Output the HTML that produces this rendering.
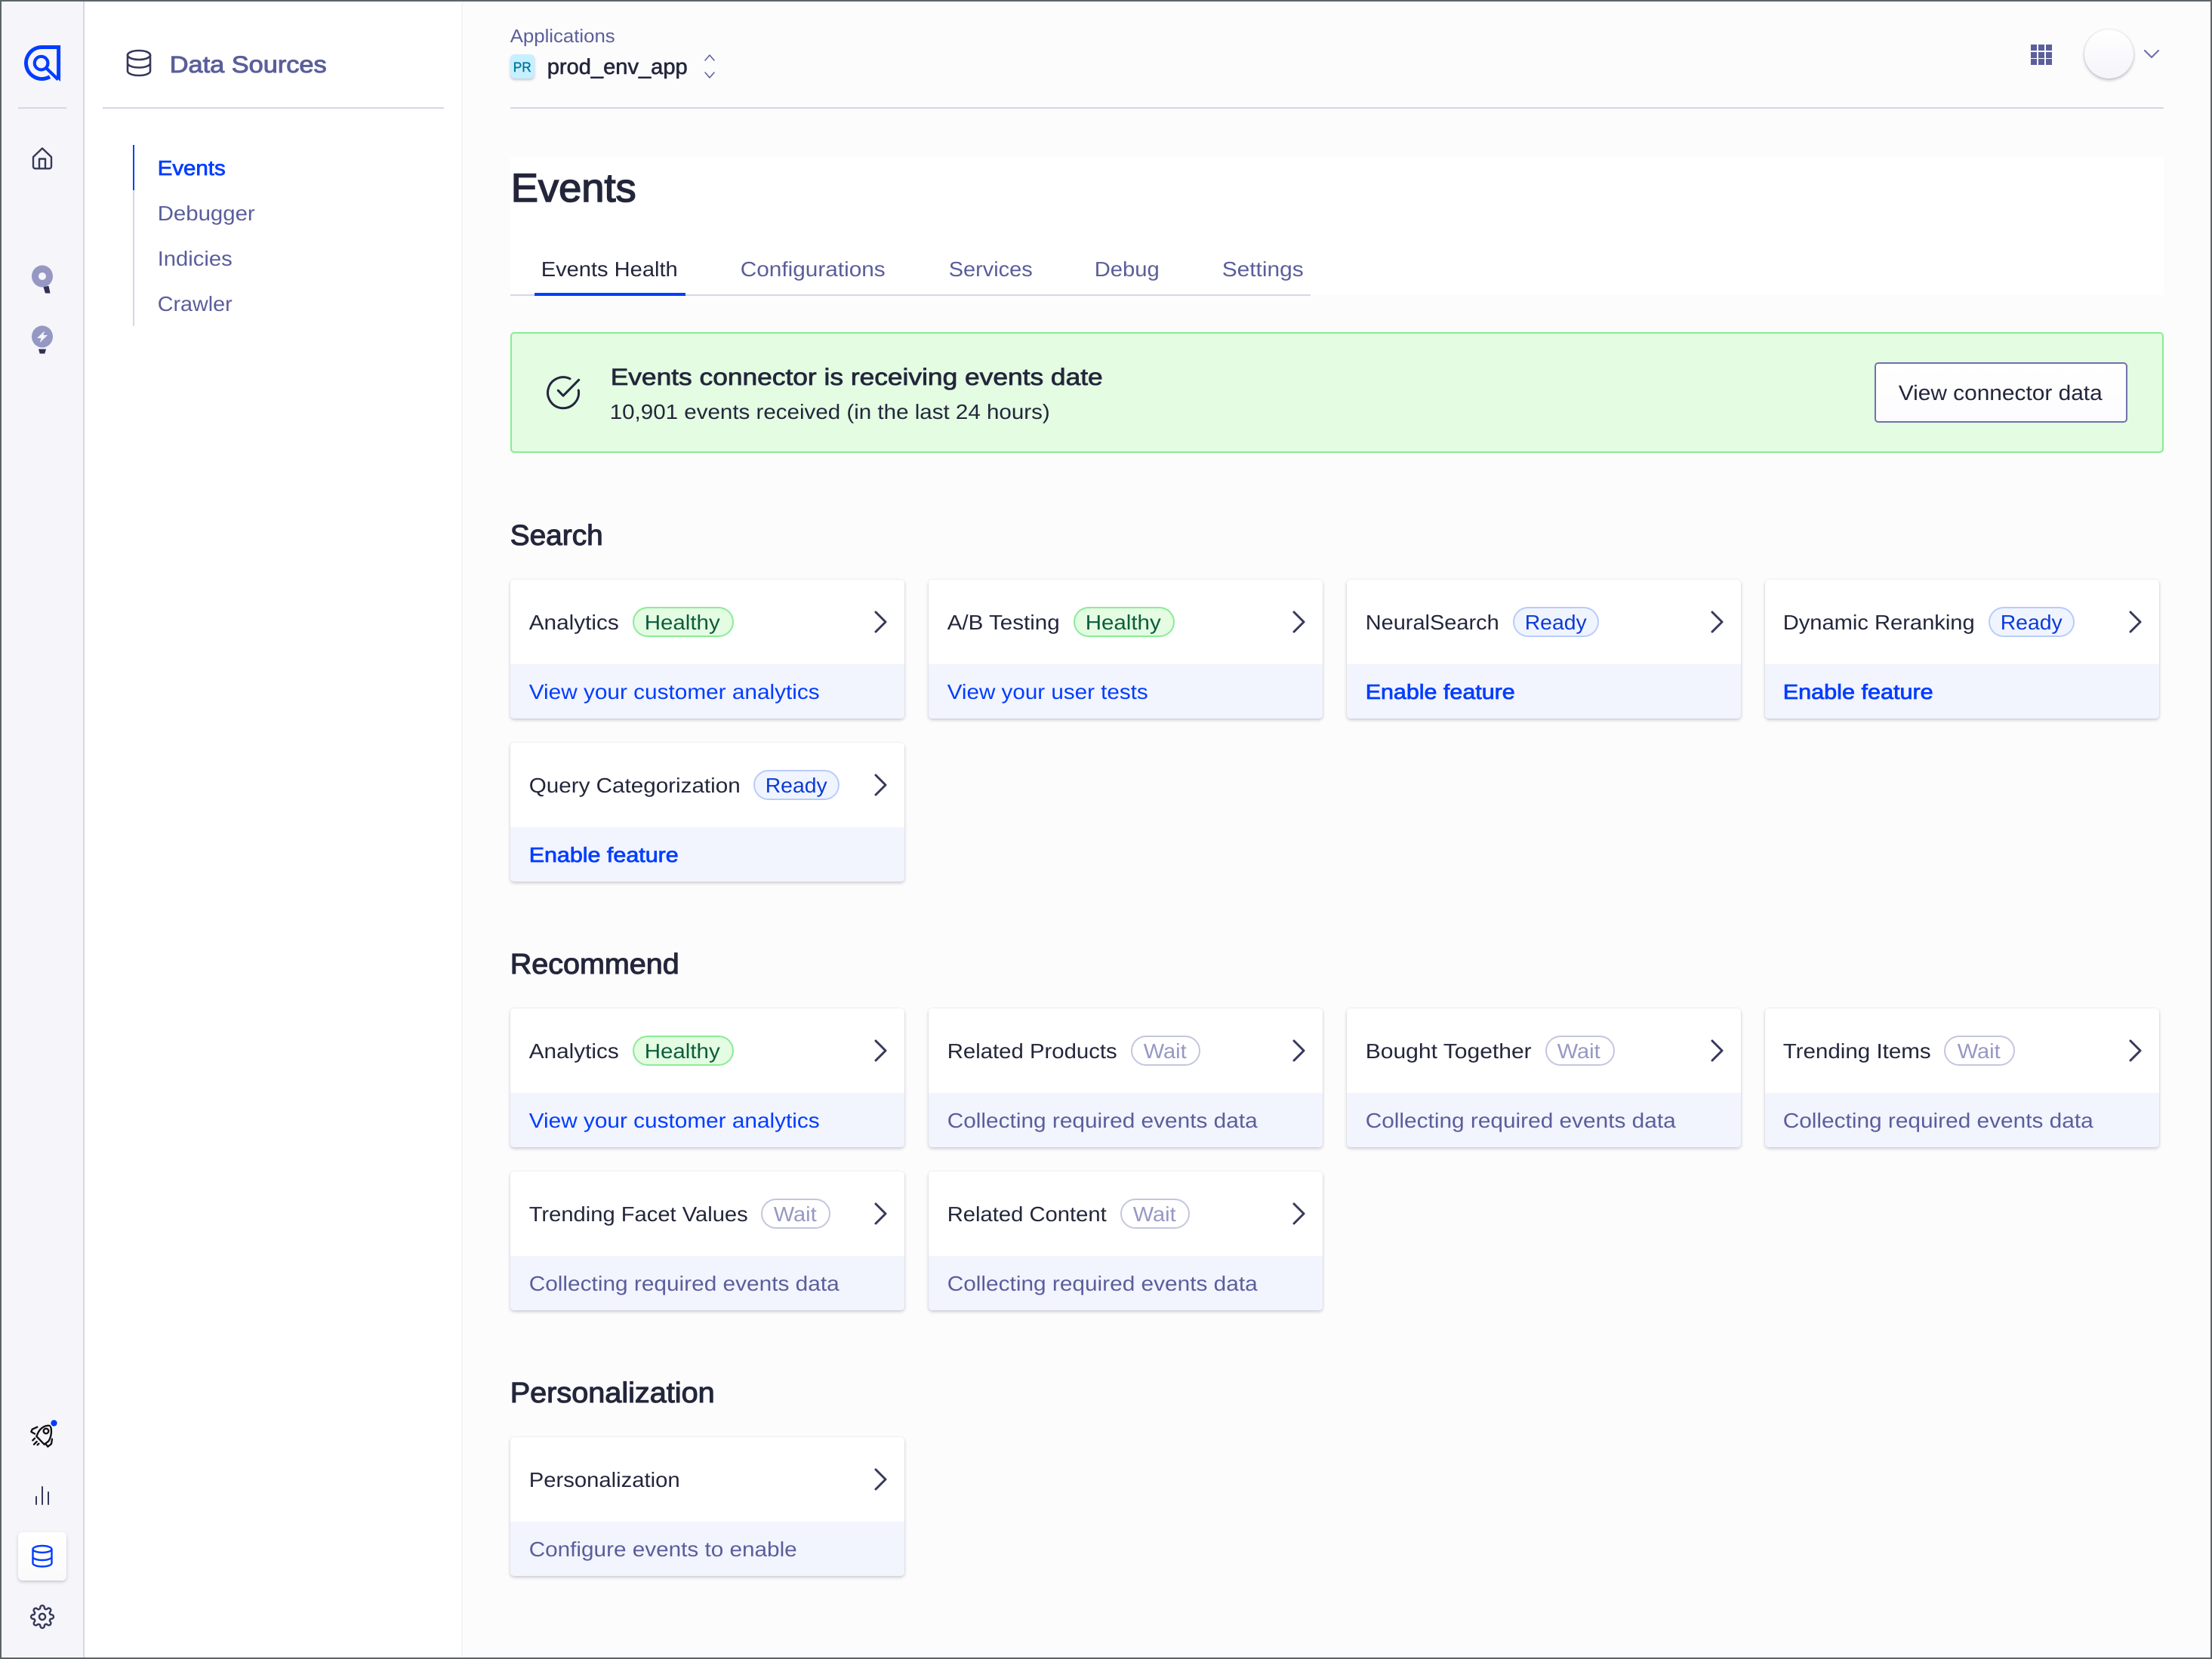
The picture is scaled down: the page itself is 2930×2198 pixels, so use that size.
<!DOCTYPE html>
<html lang="en"><head><meta charset="utf-8"><title>Events</title>
<style>
html,body{margin:0;padding:0;width:2930px;height:2198px;overflow:hidden;background:#fcfcfd}
div{position:absolute;box-sizing:border-box}
#frame{left:0;top:0;width:2930px;height:2198px;border:2px solid #5c6469;z-index:5;pointer-events:none}
.card{width:522px;height:184px;background:#fff;border-radius:5px;box-shadow:0 2px 4px rgba(35,38,59,.22),0 0 2px rgba(35,38,59,.07);overflow:hidden}
.foot{left:0;top:112px;width:522px;height:72px;background:#f2f4fe}
.b{height:40px;border-radius:20px;border:2px solid}
.h{background:#e3fce2;border-color:#8ceb98}
.r{background:#f0f4ff;border-color:#b8ccfa}
.w{background:#fff;border-color:#c4c6de}
svg{position:absolute;left:0;top:0;z-index:3}
text{font-family:"Liberation Sans",Arial,sans-serif;font-size:27.5px;text-rendering:geometricPrecision;fill:#23263b;transform:translateX(-.3px)}
.mid{fill:#5a5e9a}
.blue{fill:#003dff}
.m{stroke:#23263b;stroke-width:.6px}
.semi{stroke:#003dff;stroke-width:.75px}
.hg{fill:#0d5c3c}
.rd{fill:#0b3ad6}
.wt{fill:#9698c3}
.ic{fill:none;stroke:#36395a;stroke-width:2.4;stroke-linecap:round;stroke-linejoin:round}
.ch{fill:none;stroke:#36395a;stroke-width:3;stroke-linecap:round;stroke-linejoin:round}
</style></head><body>
<div style="left:0;top:0;width:112px;height:2198px;background:#f5f5fa;border-right:2px solid #d6d6e7"></div>
<div style="left:112px;top:0;width:499px;height:2198px;background:#fff"></div>
<div style="left:611px;top:0;width:2px;height:2198px;background:#f5f5fa"></div>
<div style="left:24px;top:142px;width:64px;height:2px;background:#d6d6e7"></div>
<div style="left:136px;top:142px;width:452px;height:2px;background:#d6d6e7"></div>
<div style="left:176px;top:192px;width:2px;height:240px;background:#d6d6e7"></div>
<div style="left:176px;top:192px;width:2px;height:60px;background:#003dff"></div>
<div style="left:24px;top:2030px;width:64px;height:64px;border-radius:6px;background:linear-gradient(#fff,#fafafb);box-shadow:0 2px 4px rgba(35,38,59,.22)"></div>
<div style="left:676px;top:142px;width:2190px;height:2px;background:#d6d6e7"></div>
<div style="left:676px;top:72px;width:32px;height:32px;border-radius:6px;background:#c6f0ff;box-shadow:0 2px 3px rgba(35,38,59,.25)"></div>
<div style="left:2761px;top:39px;width:65px;height:65px;border-radius:50%;background:linear-gradient(#fff,#f5f5fa);box-shadow:0 2px 4px rgba(35,38,59,.3),0 0 1px rgba(35,38,59,.3)"></div>
<div style="left:676px;top:208px;width:2190px;height:183px;background:#fff"></div>
<div style="left:676px;top:390px;width:1060px;height:2px;background:#d6d6e7"></div>
<div style="left:708px;top:388px;width:200px;height:4px;background:#003dff"></div>
<div style="left:676px;top:440px;width:2190px;height:160px;background:#e3fce2;border:2px solid #88ec94;border-radius:5px"></div>
<div style="left:2483px;top:480px;width:335px;height:80px;background:linear-gradient(#fff,#fcfcfe);border:2px solid #6f72ac;border-radius:5px"></div>

<div class="card" style="left:676px;top:768px"><div class="foot"></div></div>
<div class="card" style="left:1230px;top:768px"><div class="foot"></div></div>
<div class="card" style="left:1784px;top:768px"><div class="foot"></div></div>
<div class="card" style="left:2338px;top:768px"><div class="foot"></div></div>
<div class="card" style="left:676px;top:984px"><div class="foot"></div></div>
<div class="card" style="left:676px;top:1336px"><div class="foot"></div></div>
<div class="card" style="left:1230px;top:1336px"><div class="foot"></div></div>
<div class="card" style="left:1784px;top:1336px"><div class="foot"></div></div>
<div class="card" style="left:2338px;top:1336px"><div class="foot"></div></div>
<div class="card" style="left:676px;top:1552px"><div class="foot"></div></div>
<div class="card" style="left:1230px;top:1552px"><div class="foot"></div></div>
<div class="card" style="left:676px;top:1904px"><div class="foot"></div></div>

<div class="b h" style="left:838px;top:804px;width:134px"></div>
<div class="b h" style="left:1422px;top:804px;width:134px"></div>
<div class="b r" style="left:2004px;top:804px;width:114px"></div>
<div class="b r" style="left:2634px;top:804px;width:114px"></div>
<div class="b r" style="left:998px;top:1020px;width:114px"></div>
<div class="b h" style="left:838px;top:1372px;width:134px"></div>
<div class="b w" style="left:1498px;top:1372px;width:92px"></div>
<div class="b w" style="left:2047px;top:1372px;width:92px"></div>
<div class="b w" style="left:2575px;top:1372px;width:94px"></div>
<div class="b w" style="left:1008px;top:1588px;width:92px"></div>
<div class="b w" style="left:1484px;top:1588px;width:92px"></div>

<svg width="2930" height="2198" viewBox="0 0 2930 2198" xmlns="http://www.w3.org/2000/svg">
<!-- logo -->
<g fill="none" stroke="#003dff">
<path stroke-width="5" d="M66 101.7A21 21 0 1 1 55.5 62.5H77.6V103"/>
<circle stroke-width="4.2" cx="54.6" cy="83.6" r="8.8"/>
<path stroke-width="4.2" d="M61 90L77 105.5"/>
</g>
<path d="M80 60V108L75 103.2Z" fill="#003dff"/>
<!-- rail icons -->
<path class="ic" d="M44 208L56 196.5L68 208V220.5a2.8 2.8 0 0 1-2.8 2.8H46.8a2.8 2.8 0 0 1-2.8-2.8ZM52 223V210.5H60V223"/>
<ellipse cx="56" cy="366" rx="14" ry="14.5" fill="#9698c3"/><circle cx="56" cy="366" r="5" fill="#f5f5fa"/>
<path d="M57.5 380.3L64.5 378.7L66.5 388.5H60Z" fill="#2f3254"/>
<ellipse cx="56" cy="446" rx="14" ry="14.5" fill="#9698c3"/>
<path d="M59 438.5L49 448H54.5L52.8 454L63 444H57.5Z" fill="#f5f5fa"/>
<path d="M51 462.5H61L59.3 468.5H52.7Z" fill="#2f3254"/>
<!-- rocket -->
<g transform="translate(30 1875) scale(.3333)" fill="none" stroke="#111" stroke-width="7" stroke-linecap="round" stroke-linejoin="round">
<path d="M110 42C90 38 72 50 62 68L55 84L86 116L102 104C113 90 118 62 110 42Z"/>
<circle cx="93" cy="63" r="10"/>
<path d="M58 47L38 56L34 66L48 74"/>
<path d="M117 95L114 114L100 125L92 115"/>
<path d="M48 92L40 100M56 105L45 116M64 113L59 118"/>
</g>
<circle cx="71.5" cy="1885.5" r="5.6" fill="#fff"/><circle cx="71.5" cy="1885.5" r="4.2" fill="#003dff"/>
<path class="ic" style="stroke-width:2" d="M48 1983V1993M56 1970V1993M64 1977V1993"/>
<g fill="none" stroke="#003dff" stroke-width="2.4">
<ellipse cx="56" cy="2052.5" rx="12.5" ry="4.5"/>
<path d="M43.5 2052.5V2071c0 2.6 5.6 4.5 12.5 4.5s12.5-1.9 12.5-4.5V2052.5M43.5 2062.5c0 2.6 5.6 4.5 12.5 4.5s12.5-1.9 12.5-4.5"/>
</g>
<g transform="translate(39.7 2125.7) scale(1.36)" fill="none" stroke="#36395a" stroke-width="1.8" stroke-linecap="round" stroke-linejoin="round">
<circle cx="12" cy="12" r="3"/>
<path d="M19.4 15a1.65 1.65 0 0 0 .33 1.82l.06.06a2 2 0 0 1 0 2.83 2 2 0 0 1-2.83 0l-.06-.06a1.65 1.65 0 0 0-1.82-.33 1.65 1.65 0 0 0-1 1.51V21a2 2 0 0 1-2 2 2 2 0 0 1-2-2v-.09A1.65 1.65 0 0 0 9 19.4a1.65 1.65 0 0 0-1.82.33l-.06.06a2 2 0 0 1-2.83 0 2 2 0 0 1 0-2.83l.06-.06a1.65 1.65 0 0 0 .33-1.82 1.65 1.65 0 0 0-1.51-1H3a2 2 0 0 1-2-2 2 2 0 0 1 2-2h.09A1.65 1.65 0 0 0 4.6 9a1.65 1.65 0 0 0-.33-1.82l-.06-.06a2 2 0 0 1 0-2.83 2 2 0 0 1 2.83 0l.06.06a1.65 1.65 0 0 0 1.82.33H9a1.65 1.65 0 0 0 1-1.51V3a2 2 0 0 1 2-2 2 2 0 0 1 2 2v.09a1.65 1.65 0 0 0 1 1.51 1.65 1.65 0 0 0 1.82-.33l.06-.06a2 2 0 0 1 2.83 0 2 2 0 0 1 0 2.83l-.06.06a1.65 1.65 0 0 0-.33 1.82V9a1.65 1.65 0 0 0 1.51 1H21a2 2 0 0 1 2 2 2 2 0 0 1-2 2h-.09a1.65 1.65 0 0 0-1.51 1z"/>
</g>
<!-- panel -->
<g class="ic" style="stroke:#36395a;stroke-width:2.6">
<ellipse cx="184" cy="73" rx="15" ry="6"/>
<path d="M169 73V94c0 3.5 6.7 6 15 6s15-2.5 15-6V73M169 83.5c0 3.5 6.7 6 15 6s15-2.5 15-6"/>
</g>
<text x="225" y="96" style="font-size:31px;fill:#5a5e9a;stroke:#5a5e9a;stroke-width:.95px" textLength="208" lengthAdjust="spacingAndGlyphs">Data Sources</text>
<text x="209" y="232" class="blue semi" textLength="90" lengthAdjust="spacingAndGlyphs">Events</text>
<text x="209" y="292" class="mid" textLength="129" lengthAdjust="spacingAndGlyphs">Debugger</text>
<text x="209" y="352" class="mid" textLength="99" lengthAdjust="spacingAndGlyphs">Indicies</text>
<text x="209" y="412" class="mid" textLength="99" lengthAdjust="spacingAndGlyphs">Crawler</text>
<!-- header -->
<text x="676" y="56" class="mid" style="font-size:24.5px" textLength="139" lengthAdjust="spacingAndGlyphs">Applications</text>
<text x="680" y="95" style="font-size:18px;fill:#00739c;stroke:#00739c;stroke-width:.4px" textLength="24" lengthAdjust="spacingAndGlyphs">PR</text>
<text x="725" y="98" class="m" style="font-size:28.5px" textLength="186" lengthAdjust="spacingAndGlyphs">prod_env_app</text>
<path d="M934 80L940 73L946 80M934 96L940 103L946 96" fill="none" stroke="#5a5e9a" stroke-width="1.5" stroke-linecap="round" stroke-linejoin="round"/>
<path fill="#5a5e9a" d="M2690 59h8v8h-8zM2700 59h8v8h-8zM2710 59h8v8h-8zM2690 69h8v8h-8zM2700 69h8v8h-8zM2710 69h8v8h-8zM2690 78h8v8h-8zM2700 78h8v8h-8zM2710 78h8v8h-8z"/>
<path d="M2841 67L2850 76L2859 67" fill="none" stroke="#6f72ac" stroke-width="2.2" stroke-linecap="round" stroke-linejoin="round"/>
<!-- title + tabs -->
<text x="677" y="267" style="font-size:53px;stroke:#23263b;stroke-width:1.5px" textLength="166" lengthAdjust="spacingAndGlyphs">Events</text>
<text x="717" y="366" textLength="181" lengthAdjust="spacingAndGlyphs">Events Health</text>
<text x="981" y="366" class="mid" textLength="192" lengthAdjust="spacingAndGlyphs">Configurations</text>
<text x="1257" y="366" class="mid" textLength="111" lengthAdjust="spacingAndGlyphs">Services</text>
<text x="1450" y="366" class="mid" textLength="86" lengthAdjust="spacingAndGlyphs">Debug</text>
<text x="1619" y="366" class="mid" textLength="108" lengthAdjust="spacingAndGlyphs">Settings</text>
<!-- banner -->
<path d="M755 501.8A20.5 20.5 0 1 0 766.3 517M739.3 517.3L746 524.3L766.7 503.3" fill="none" stroke="#23263b" stroke-width="3" stroke-linecap="round" stroke-linejoin="round"/>
<text x="809" y="510" class="m" style="font-size:31px;stroke-width:.75px" textLength="652" lengthAdjust="spacingAndGlyphs">Events connector is receiving events date</text>
<text x="808" y="555" textLength="583" lengthAdjust="spacingAndGlyphs">10,901 events received (in the last 24 hours)</text>
<text x="2515" y="530" style="font-size:28px" textLength="270" lengthAdjust="spacingAndGlyphs">View connector data</text>
<!-- headings -->
<text x="676" y="722" class="m" style="font-size:38px;stroke-width:1.1px" textLength="123" lengthAdjust="spacingAndGlyphs">Search</text>
<text x="676" y="1290" class="m" style="font-size:38px;stroke-width:1.1px" textLength="224" lengthAdjust="spacingAndGlyphs">Recommend</text>
<text x="676" y="1858" class="m" style="font-size:38px;stroke-width:1.1px" textLength="271" lengthAdjust="spacingAndGlyphs">Personalization</text>
<!-- Search cards -->
<text x="701" y="834" textLength="119" lengthAdjust="spacingAndGlyphs">Analytics</text>
<text x="854" y="834" class="hg" textLength="100" lengthAdjust="spacingAndGlyphs">Healthy</text>
<path class="ch" d="M1160 811L1173 824L1160 837"/>
<text x="701" y="926" class="blue" textLength="385" lengthAdjust="spacingAndGlyphs">View your customer analytics</text>
<text x="1255" y="834" textLength="149" lengthAdjust="spacingAndGlyphs">A/B Testing</text>
<text x="1438" y="834" class="hg" textLength="100" lengthAdjust="spacingAndGlyphs">Healthy</text>
<path class="ch" d="M1714 811L1727 824L1714 837"/>
<text x="1255" y="926" class="blue" textLength="266" lengthAdjust="spacingAndGlyphs">View your user tests</text>
<text x="1809" y="834" textLength="177" lengthAdjust="spacingAndGlyphs">NeuralSearch</text>
<text x="2020" y="834" class="rd" textLength="82" lengthAdjust="spacingAndGlyphs">Ready</text>
<path class="ch" d="M2268 811L2281 824L2268 837"/>
<text x="1809" y="926" class="blue semi" textLength="198" lengthAdjust="spacingAndGlyphs">Enable feature</text>
<text x="2362" y="834" textLength="254" lengthAdjust="spacingAndGlyphs">Dynamic Reranking</text>
<text x="2650" y="834" class="rd" textLength="82" lengthAdjust="spacingAndGlyphs">Ready</text>
<path class="ch" d="M2822 811L2835 824L2822 837"/>
<text x="2362" y="926" class="blue semi" textLength="199" lengthAdjust="spacingAndGlyphs">Enable feature</text>
<text x="701" y="1050" textLength="280" lengthAdjust="spacingAndGlyphs">Query Categorization</text>
<text x="1014" y="1050" class="rd" textLength="82" lengthAdjust="spacingAndGlyphs">Ready</text>
<path class="ch" d="M1160 1027L1173 1040L1160 1053"/>
<text x="701" y="1142" class="blue semi" textLength="198" lengthAdjust="spacingAndGlyphs">Enable feature</text>
<!-- Recommend cards -->
<text x="701" y="1402" textLength="119" lengthAdjust="spacingAndGlyphs">Analytics</text>
<text x="854" y="1402" class="hg" textLength="100" lengthAdjust="spacingAndGlyphs">Healthy</text>
<path class="ch" d="M1160 1379L1173 1392L1160 1405"/>
<text x="701" y="1494" class="blue" textLength="385" lengthAdjust="spacingAndGlyphs">View your customer analytics</text>
<text x="1255" y="1402" textLength="225" lengthAdjust="spacingAndGlyphs">Related Products</text>
<text x="1515" y="1402" class="wt" textLength="57" lengthAdjust="spacingAndGlyphs">Wait</text>
<path class="ch" d="M1714 1379L1727 1392L1714 1405"/>
<text x="1255" y="1494" class="mid" textLength="411" lengthAdjust="spacingAndGlyphs">Collecting required events data</text>
<text x="1809" y="1402" textLength="220" lengthAdjust="spacingAndGlyphs">Bought Together</text>
<text x="2063" y="1402" class="wt" textLength="57" lengthAdjust="spacingAndGlyphs">Wait</text>
<path class="ch" d="M2268 1379L2281 1392L2268 1405"/>
<text x="1809" y="1494" class="mid" textLength="411" lengthAdjust="spacingAndGlyphs">Collecting required events data</text>
<text x="2362" y="1402" textLength="196" lengthAdjust="spacingAndGlyphs">Trending Items</text>
<text x="2593" y="1402" class="wt" textLength="57" lengthAdjust="spacingAndGlyphs">Wait</text>
<path class="ch" d="M2822 1379L2835 1392L2822 1405"/>
<text x="2362" y="1494" class="mid" textLength="411" lengthAdjust="spacingAndGlyphs">Collecting required events data</text>
<text x="701" y="1618" textLength="290" lengthAdjust="spacingAndGlyphs">Trending Facet Values</text>
<text x="1025" y="1618" class="wt" textLength="57" lengthAdjust="spacingAndGlyphs">Wait</text>
<path class="ch" d="M1160 1595L1173 1608L1160 1621"/>
<text x="701" y="1710" class="mid" textLength="411" lengthAdjust="spacingAndGlyphs">Collecting required events data</text>
<text x="1255" y="1618" textLength="211" lengthAdjust="spacingAndGlyphs">Related Content</text>
<text x="1501" y="1618" class="wt" textLength="57" lengthAdjust="spacingAndGlyphs">Wait</text>
<path class="ch" d="M1714 1595L1727 1608L1714 1621"/>
<text x="1255" y="1710" class="mid" textLength="411" lengthAdjust="spacingAndGlyphs">Collecting required events data</text>
<!-- Personalization -->
<text x="701" y="1970" textLength="200" lengthAdjust="spacingAndGlyphs">Personalization</text>
<path class="ch" d="M1160 1947L1173 1960L1160 1973"/>
<text x="701" y="2062" class="mid" textLength="355" lengthAdjust="spacingAndGlyphs">Configure events to enable</text>
</svg>
<div id="frame"></div>
</body></html>
